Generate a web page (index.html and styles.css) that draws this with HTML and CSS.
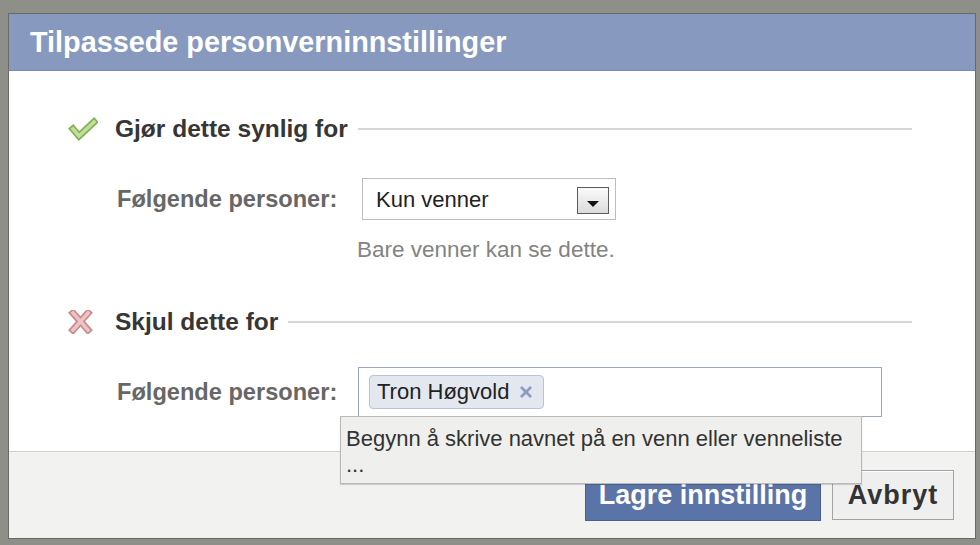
FILE: index.html
```html
<!DOCTYPE html>
<html lang="no">
<head>
<meta charset="utf-8">
<title>Tilpassede personverninnstillinger</title>
<link rel="stylesheet" href="styles.css">
</head>
<body>
<div class="dialog">
  <div class="dlg-header">
    <h1 class="dlg-title">Tilpassede personverninnstillinger</h1>
  </div>
  <div class="dlg-body">
    <section class="sect">
      <div class="sect-head">
        <svg class="sect-icon" viewBox="0 0 30 24" aria-hidden="true">
          <polyline points="5,12 11,19 26,5" fill="none" stroke="#86b05c" stroke-width="7" stroke-linejoin="miter" stroke-linecap="square"/>
          <polyline points="5,12 11,19 26,5" fill="none" stroke="#bfe196" stroke-width="3.5" stroke-linejoin="miter" stroke-linecap="square"/>
        </svg>
        <h2 class="sect-title">Gjør dette synlig for</h2>
        <span class="rule"></span>
      </div>
      <div class="field-row">
        <label class="field-label">Følgende personer:</label>
        <div class="select">
          <span class="select-value">Kun venner</span>
          <span class="select-btn"><span class="tri"></span></span>
        </div>
      </div>
      <p class="hint">Bare venner kan se dette.</p>
    </section>
    <section class="sect sect-hide">
      <div class="sect-head">
        <svg class="sect-icon" viewBox="0 0 30 24" aria-hidden="true">
          <g stroke-linecap="square">
            <line x1="5" y1="3" x2="20" y2="20" stroke="#c48e8e" stroke-width="7"/>
            <line x1="20" y1="3" x2="5" y2="20" stroke="#c48e8e" stroke-width="7"/>
            <line x1="5" y1="3" x2="20" y2="20" stroke="#efc3c3" stroke-width="3.5"/>
            <line x1="20" y1="3" x2="5" y2="20" stroke="#efc3c3" stroke-width="3.5"/>
          </g>
        </svg>
        <h2 class="sect-title">Skjul dette for</h2>
        <span class="rule"></span>
      </div>
      <div class="field-row field-row-tokens">
        <label class="field-label">Følgende personer:</label>
        <div class="token-field">
          <span class="token">Tron Høgvold
            <svg class="token-x" viewBox="0 0 14 14" aria-hidden="true">
              <line x1="2" y1="2" x2="12" y2="12" stroke="#8d9bbf" stroke-width="2.6"/>
              <line x1="12" y1="2" x2="2" y2="12" stroke="#8d9bbf" stroke-width="2.6"/>
            </svg>
          </span>
          <div class="typeahead">Begynn å skrive navnet på en venn eller venneliste<br>...</div>
        </div>
      </div>
    </section>
  </div>
  <div class="dlg-footer">
    <button class="btn btn-primary" type="button">Lagre innstilling</button>
    <button class="btn btn-cancel" type="button">Avbryt</button>
  </div>
</div>
</body>
</html>
```

FILE: styles.css
```css
* {
  box-sizing: border-box;
}

html, body {
  margin: 0;
  height: 545px;
  overflow: hidden;
}

body {
  background: #8d8f88;
  font-family: "Liberation Sans", Arial, sans-serif;
}

.dialog {
  margin: 13px 0 0 8px;
  width: 968px;
  height: 526px;
  border: 1px solid #686a65;
  background: #fff;
  display: flex;
  flex-direction: column;
}

.dlg-header {
  height: 57px;
  flex: none;
  background: #8799bf;
  border-bottom: 1px solid #7688b3;
  display: flex;
  align-items: center;
  padding-left: 21px;
}

.dlg-title {
  margin: 0;
  font-size: 28.8px;
  font-weight: 700;
  line-height: 1;
  color: #fff;
}

.dlg-body {
  height: 380px;
  flex: none;
  padding: 44px 63px 0 59px;
}

.sect-head {
  display: flex;
  align-items: center;
  height: 28px;
}

.sect-icon {
  width: 30px;
  height: 24px;
  flex: none;
}

.sect-title {
  margin: 0 0 0 17px;
  font-size: 24.5px;
  font-weight: 700;
  line-height: 28px;
  color: #363636;
  white-space: nowrap;
}

.rule {
  flex: 1;
  height: 2px;
  margin-left: 10px;
  background: #d6d6d6;
}

.field-row {
  display: flex;
  align-items: center;
  margin: 35px 0 0 49px;
}

.field-label {
  width: 245px;
  flex: none;
  font-size: 23.6px;
  font-weight: 700;
  color: #676767;
}

.select {
  width: 254px;
  height: 42px;
  border: 1px solid #bdbdbd;
  display: flex;
  align-items: center;
  justify-content: space-between;
  padding: 2px 6px 0 13px;
}

.select-value {
  font-size: 22px;
  color: #222;
}

.select-btn {
  width: 32px;
  height: 27px;
  border: 1px solid #5c5c5c;
  background: linear-gradient(#fbfbfb, #dadada);
  display: flex;
  align-items: flex-end;
  justify-content: center;
  padding-bottom: 6px;
}

.tri {
  width: 0;
  height: 0;
  border-left: 6px solid transparent;
  border-right: 6px solid transparent;
  border-top: 6px solid #111;
}

.hint {
  margin: 17px 0 0 289px;
  font-size: 22.5px;
  line-height: 26px;
  color: #838383;
}

.sect-hide {
  margin-top: 45px;
}

.field-row-tokens {
  margin-top: 31px;
}

.token-field {
  position: relative;
  margin-left: -4px;
  width: 524px;
  height: 50px;
  border: 1px solid #9ba7c2;
  padding: 7px 0 0 10px;
}

.token {
  display: inline-flex;
  align-items: center;
  gap: 10px;
  height: 34px;
  padding: 0 10px 0 7px;
  background: #e3e7f0;
  border: 1px solid #b9c3d9;
  border-radius: 4px;
  font-size: 22px;
  color: #222;
}

.token-x {
  width: 14px;
  height: 14px;
}

.typeahead {
  position: absolute;
  left: -19px;
  top: 48px;
  width: 522px;
  height: 68px;
  background: #efefed;
  border: 1px solid #b8b8b8;
  box-shadow: 0 1px 1px rgba(0, 0, 0, 0.15);
  padding: 9px 0 0 5px;
  font-size: 22px;
  line-height: 26px;
  color: #333;
  z-index: 2;
}

.dlg-footer {
  flex: 1;
  background: #f2f2f0;
  border-top: 1px solid #cfcfcf;
  display: flex;
  justify-content: flex-end;
  align-items: flex-start;
  gap: 11px;
  padding: 18px 21px 0 0;
}

.btn {
  font-family: "Liberation Sans", Arial, sans-serif;
  font-size: 27px;
  font-weight: 700;
  margin: 0;
  padding: 0;
  cursor: pointer;
}

.btn-primary {
  width: 236px;
  height: 51px;
  background: #5b74a8;
  border: 1px solid #495f93;
  color: #fff;
}

.btn-cancel {
  width: 122px;
  height: 50px;
  background: #efefef;
  border: 1px solid #a3a3a3;
  box-shadow: inset 0 1px 0 #fff;
  color: #333;
  letter-spacing: 1px;
}
```
